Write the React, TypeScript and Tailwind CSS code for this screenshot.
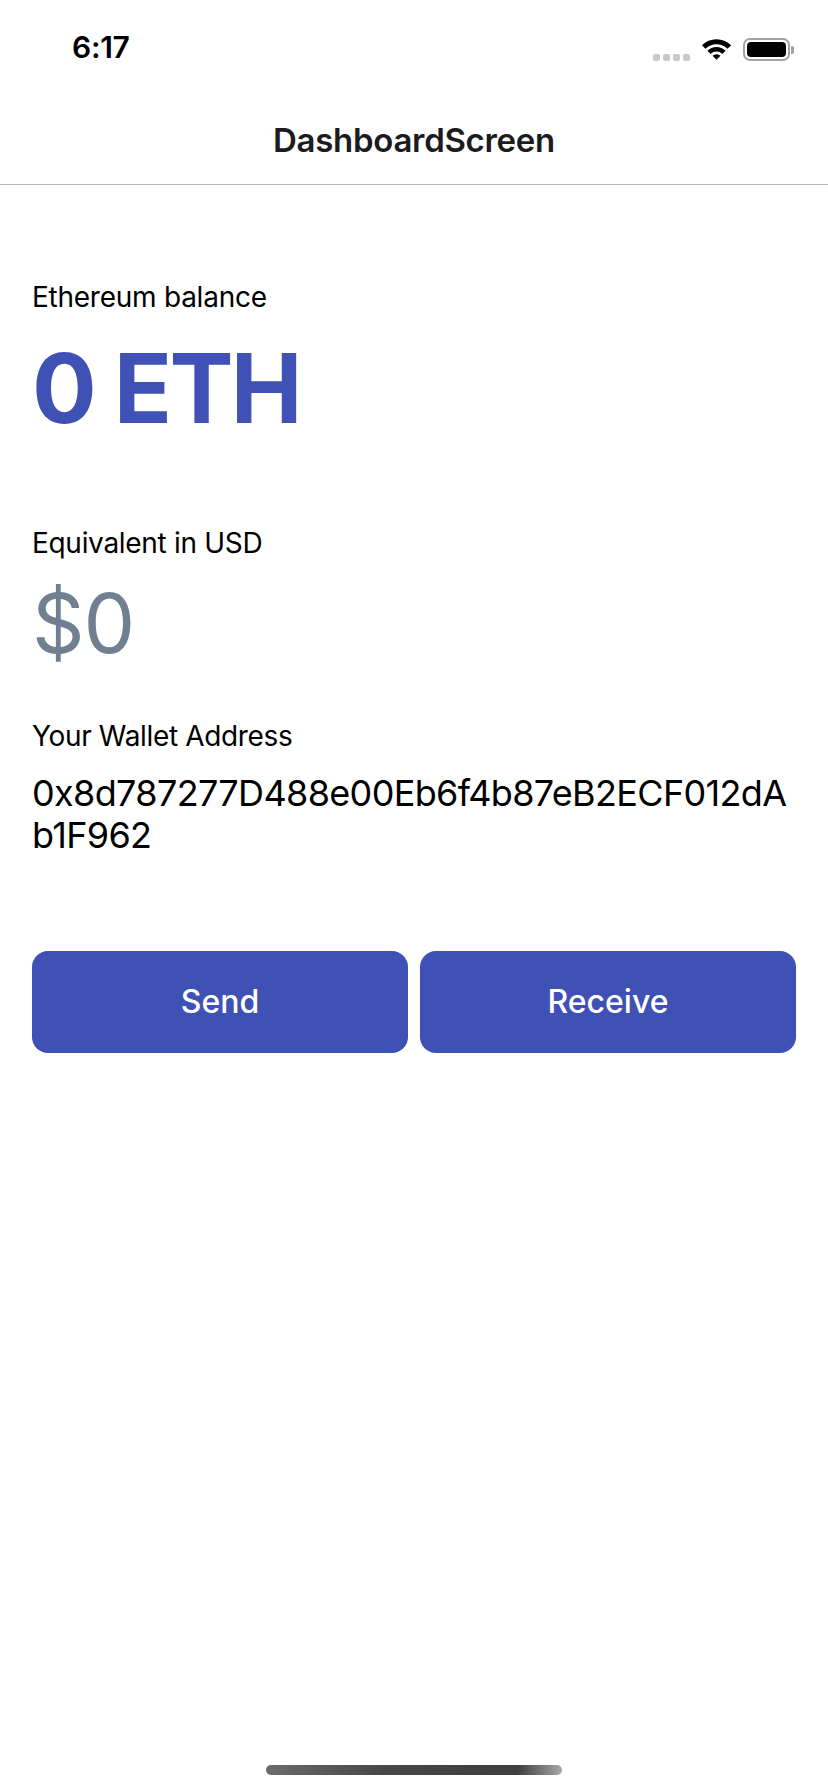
import React from 'react';

const walletAddress = '0x8d787277D488e00Eb6f4b87eB2ECF012dAb1F962';

function WifiIcon() {
  return (
    <svg width="31" height="23" viewBox="0 0 30 22" fill="#000">
      <path d="M0.86 6.86 A20 20 0 0 1 29.14 6.86 L25.61 10.39 A15 15 0 0 0 4.39 10.39 Z" />
      <path d="M6.16 12.16 A12.5 12.5 0 0 1 23.84 12.16 L20.66 15.34 A8 8 0 0 0 9.34 15.34 Z" />
      <path d="M11.11 17.11 A5.5 5.5 0 0 1 18.89 17.11 L15 21 Z" />
    </svg>
  );
}

function StatusBar() {
  return (
    <div className="h-[96px] flex items-start justify-between pt-[29px] pl-[72px] pr-[34px]">
      <span className="text-[30px] leading-[36px] font-semibold text-black tracking-[-0.3px]">6:17</span>
      <div className="flex items-center mt-[9px] gap-[11px]">
        {/* signal dots */}
        <div className="flex items-center gap-[3px] mt-[15px]">
          <span className="w-[7px] h-[7px] rounded-[2px] bg-[#c9c9c9]" />
          <span className="w-[7px] h-[7px] rounded-[2px] bg-[#c9c9c9]" />
          <span className="w-[7px] h-[7px] rounded-[2px] bg-[#c9c9c9]" />
          <span className="w-[7px] h-[7px] rounded-[2px] bg-[#c9c9c9]" />
        </div>
        <WifiIcon />
        {/* battery */}
        <div className="flex items-center">
          <div className="w-[47px] h-[23px] rounded-[7px] border-[2px] border-[#a3a3a3] p-[2px]">
            <div className="w-full h-full rounded-[4px] bg-black" />
          </div>
          <div className="w-[3px] h-[8px] rounded-r-[2px] bg-[#a3a3a3] ml-[1px]" />
        </div>
      </div>
    </div>
  );
}

export default function App() {
  return (
    <div
      className="relative w-[828px] h-[1792px] bg-white overflow-hidden"
      style={{ fontFamily: 'Inter, "Noto Sans", "Liberation Sans", sans-serif' }}
    >
      <StatusBar />

      {/* Header */}
      <div className="h-[89px] flex items-center justify-center border-b border-[#b8b8bb]">
        <h1 className="text-[33px] leading-[40px] font-semibold text-[#1c1c1e] tracking-[-0.3px]">DashboardScreen</h1>
      </div>

      {/* Content */}
      <div className="px-[32px]">
        <p className="mt-[95px] text-[28px] leading-[34px] text-black tracking-[-0.25px]">Ethereum balance</p>
        <p className="mt-[16px] text-[96px] leading-[116px] font-bold text-[#3f51b5] tracking-[-2.8px]">0 ETH</p>

        <p className="mt-[80px] text-[28px] leading-[34px] text-black tracking-[-0.3px]">Equivalent in USD</p>
        <p className="mt-[14px] text-[82px] leading-[100px] text-[#708090] tracking-[-1px]">$0</p>

        <p className="mt-[45px] text-[28px] leading-[34px] text-black tracking-[-0.35px]">Your Wallet Address</p>
        <p className="mt-[19px] text-[36px] leading-[42px] text-black break-all tracking-[-0.65px]">{walletAddress}</p>

        {/* Action Buttons */}
        <div className="mt-[95px] grid grid-cols-2 gap-[12px]">
          <button className="h-[102px] rounded-[16px] bg-[#3f51b5] text-white text-[32px] font-medium">Send</button>
          <button className="h-[102px] rounded-[16px] bg-[#3f51b5] text-white text-[32px] font-medium">Receive</button>
        </div>
      </div>

      {/* Home indicator */}
      <div className="absolute bottom-[17px] left-[266px] w-[296px] h-[10px] rounded-full bg-[linear-gradient(90deg,#6b6b6b_0%,#474747_40%,#3e3e3e_85%,#a8a8a8_100%)]" />
    </div>
  );
}
